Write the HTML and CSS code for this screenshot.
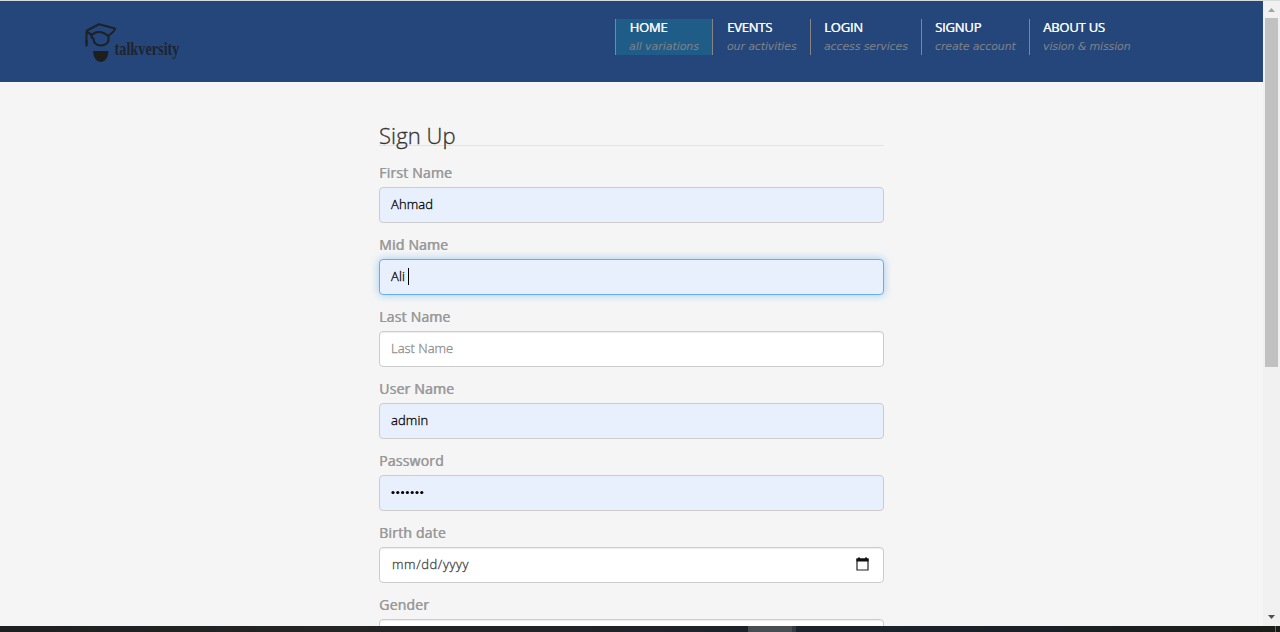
FILE: index.html
```html
<!DOCTYPE html>
<html lang="en">
<head>
<meta charset="utf-8">
<title>Talkversity - Sign Up</title>
<link rel="stylesheet" href="styles.css">
</head>
<body>
<div class="viewport">
  <div class="page">
    <header class="header">
      <a class="logo">
        <svg width="120" height="60" viewBox="0 0 120 60">
          <g fill="none" stroke="#1e2226" stroke-width="2.100" stroke-linejoin="round" stroke-linecap="round">
            <path d="M8 16L2.500 12.500Q2.500 11.500 4 11L15 5.200L31 9.500Q31 12 24 17Q20 13 14.500 13Q10.500 13 8 16M2.500 12.500V24"/>
            <path d="M7.500 15.500V18.500L9.500 19.500Q9.500 26 16.500 26.500Q23.500 26 24.500 21.500V17"/>
          </g>
          <path d="M1.300 21H3.700V27L1.500 28Z" fill="#1e2226"/>
          <path d="M9 32H24.500Q23.500 43 16.800 43Q10 43 9 32Z" fill="#1e1e1c"/>
          <text class="logo-text" x="30.500" y="35.500" textLength="65" lengthAdjust="spacingAndGlyphs">talkversity</text>
        </svg>
      </a>
      <nav class="nav">
        <a class="nav-item active home"><span class="title">HOME</span><span class="sub">all variations</span></a>
        <a class="nav-item events"><span class="title">EVENTS</span><span class="sub">our activities</span></a>
        <a class="nav-item login"><span class="title">LOGIN</span><span class="sub">access services</span></a>
        <a class="nav-item signup"><span class="title">SIGNUP</span><span class="sub">create account</span></a>
        <a class="nav-item about"><span class="title">ABOUT US</span><span class="sub">vision &amp; mission</span></a>
      </nav>
    </header>
    <main class="form">
      <h1 class="heading">Sign Up</h1>
      <div class="group"><div class="label">First Name</div><div class="field filled">Ahmad</div></div>
      <div class="group"><div class="label">Mid Name</div><div class="field filled focus">Ali<span class="caret"></span></div></div>
      <div class="group"><div class="label">Last Name</div><div class="field placeholder">Last Name</div></div>
      <div class="group"><div class="label">User Name</div><div class="field filled">admin</div></div>
      <div class="group"><div class="label">Password</div><div class="field filled">
        <svg width="34" height="6" viewBox="0 0 34 6"><g fill="#000"><circle cx="2" cy="3.500" r="1.600"/><circle cx="6.800" cy="3.500" r="1.600"/><circle cx="11.600" cy="3.500" r="1.600"/><circle cx="16.400" cy="3.500" r="1.600"/><circle cx="21.200" cy="3.500" r="1.600"/><circle cx="26" cy="3.500" r="1.600"/><circle cx="30.800" cy="3.500" r="1.600"/></g></svg>
      </div></div>
      <div class="group"><div class="label">Birth date</div><div class="field date"><span>mm/dd/yyyy</span>
        <svg class="calendar" width="13" height="14" viewBox="0 0 13 14"><path d="M1 2H12V13H1Z" fill="none" stroke="#222" stroke-width="1.200"/><path d="M.5 1.500H12.500V4.500H.5ZM2 .5H4V2H2ZM9 .5H11V2H9Z" fill="#111"/></svg>
      </div></div>
      <div class="group"><div class="label">Gender</div><div class="field"></div></div>
    </main>
  </div>
  <div class="scrollbar">
    <svg class="arrow" width="7" height="4" viewBox="0 0 7 4"><path d="M0 4H7L3.500 0Z" fill="#a3a3a3"/></svg>
    <div class="thumb"></div>
    <svg class="arrow down" width="7" height="4" viewBox="0 0 7 4"><path d="M0 0H7L3.500 4Z" fill="#505050"/></svg>
  </div>
</div>
<div class="taskbar"><div class="task"></div><div class="task-edge"></div><div class="desktop-edge"></div></div>
</body>
</html>
```
FILE: styles.css
```css
* { box-sizing: border-box; }
body {
  margin: 0;
  width: 1280px;
  height: 632px;
  overflow: hidden;
  display: flex;
  flex-direction: column;
  border-top: 1px solid #d5dbdc;
  background: #f5f5f5;
  font-family: "Open Sans", sans-serif;
}
.viewport { height: 625px; display: flex; }
.page { width: 1263px; height: 625px; overflow: hidden; }
.header {
  height: 81px;
  background: #25467b;
  display: flex;
  justify-content: space-between;
  padding: 18px 118px 0 84px;
}
.logo svg { display: block; overflow: visible; }
.logo-text {
  font: bold 19px "Liberation Serif", serif;
  fill: #1e2430;
}
.nav { display: flex; height: 36px; }
.nav-item {
  border-right: 1px solid #858585;
  padding-left: 14px;
  white-space: nowrap;
}
.nav-item.active { background: #205c88; border-left: 1px solid #858585; padding-left: 13.5px; }
.home { width: 98px; }
.events { width: 98px; }
.login { width: 111px; padding-left: 13px; }
.signup { width: 108px; padding-left: 13px; }
.about { width: 115px; padding-left: 13px; border-right: 0; }
.title, .sub { display: block; }
.title {
  height: 18px;
  line-height: 17px;
  font-size: 13px;
  letter-spacing: -.2px;
  color: #f8f8f8;
  text-shadow: .4px 0 #f8f8f8;
}
.sub {
  height: 18px;
  font: italic 11px/20px "DejaVu Sans", sans-serif;
  letter-spacing: -.13px;
  color: #808387;
}
.home .sub { letter-spacing: -.06px; margin-left: -.5px; }
.form { width: 505px; margin-left: 379px; padding-top: 40px; }
.heading {
  margin: 0 0 17px;
  height: 24px;
  border-bottom: 1px solid #e3e3e3;
  font-size: 22px;
  font-weight: 300;
  line-height: 26px;
  letter-spacing: .1px;
  color: #333;
  -webkit-text-stroke: .3px #333;
}
.group { height: 72px; }
.label {
  height: 24px;
  line-height: 20px;
  font-size: 14px;
  letter-spacing: .2px;
  color: #999;
  text-shadow: .6px 0 #999;
}
.field {
  height: 36px;
  border: 1px solid #ccc;
  border-radius: 4px;
  background: #fff;
  box-shadow: inset 0 1px 1px rgba(0,0,0,.075);
  padding: 0 14px 2px 11px;
  display: flex;
  align-items: center;
  font-size: 13px;
  font-weight: 300;
  -webkit-text-stroke: .3px currentColor;
  color: #000;
}
.filled { background: #e8f0fe; box-shadow: none; letter-spacing: .1px; }
.focus { border-color: #66afe9; box-shadow: 0 0 8px rgba(102,175,233,.6); }
.caret { width: 1px; height: 17px; margin-left: 3px; background: #000; }
.placeholder { color: #8c8c8c; }
.date { justify-content: space-between; color: #444; letter-spacing: .6px; padding-left: 12px; }
.scrollbar {
  width: 17px;
  background: #f1f1f1;
  display: flex;
  flex-direction: column;
  align-items: center;
  padding: 7px 0 7px;
}
.arrow { flex: none; display: block; }
.thumb { width: 13px; height: 349px; margin-top: 6px; background: #c1c1c1; }
.down { margin-top: auto; }
.taskbar { height: 6px; display: flex; background: linear-gradient(90deg, #1d2021, #242424 25%, #202329 50%, #1a222c 70%, #1b1d18); }
.task { width: 44px; margin-left: 748px; background: #484d52; }
.task-edge { width: 4px; background: #343a41; }
.desktop-edge { width: 1px; margin-left: 479px; background: #666; }
```
